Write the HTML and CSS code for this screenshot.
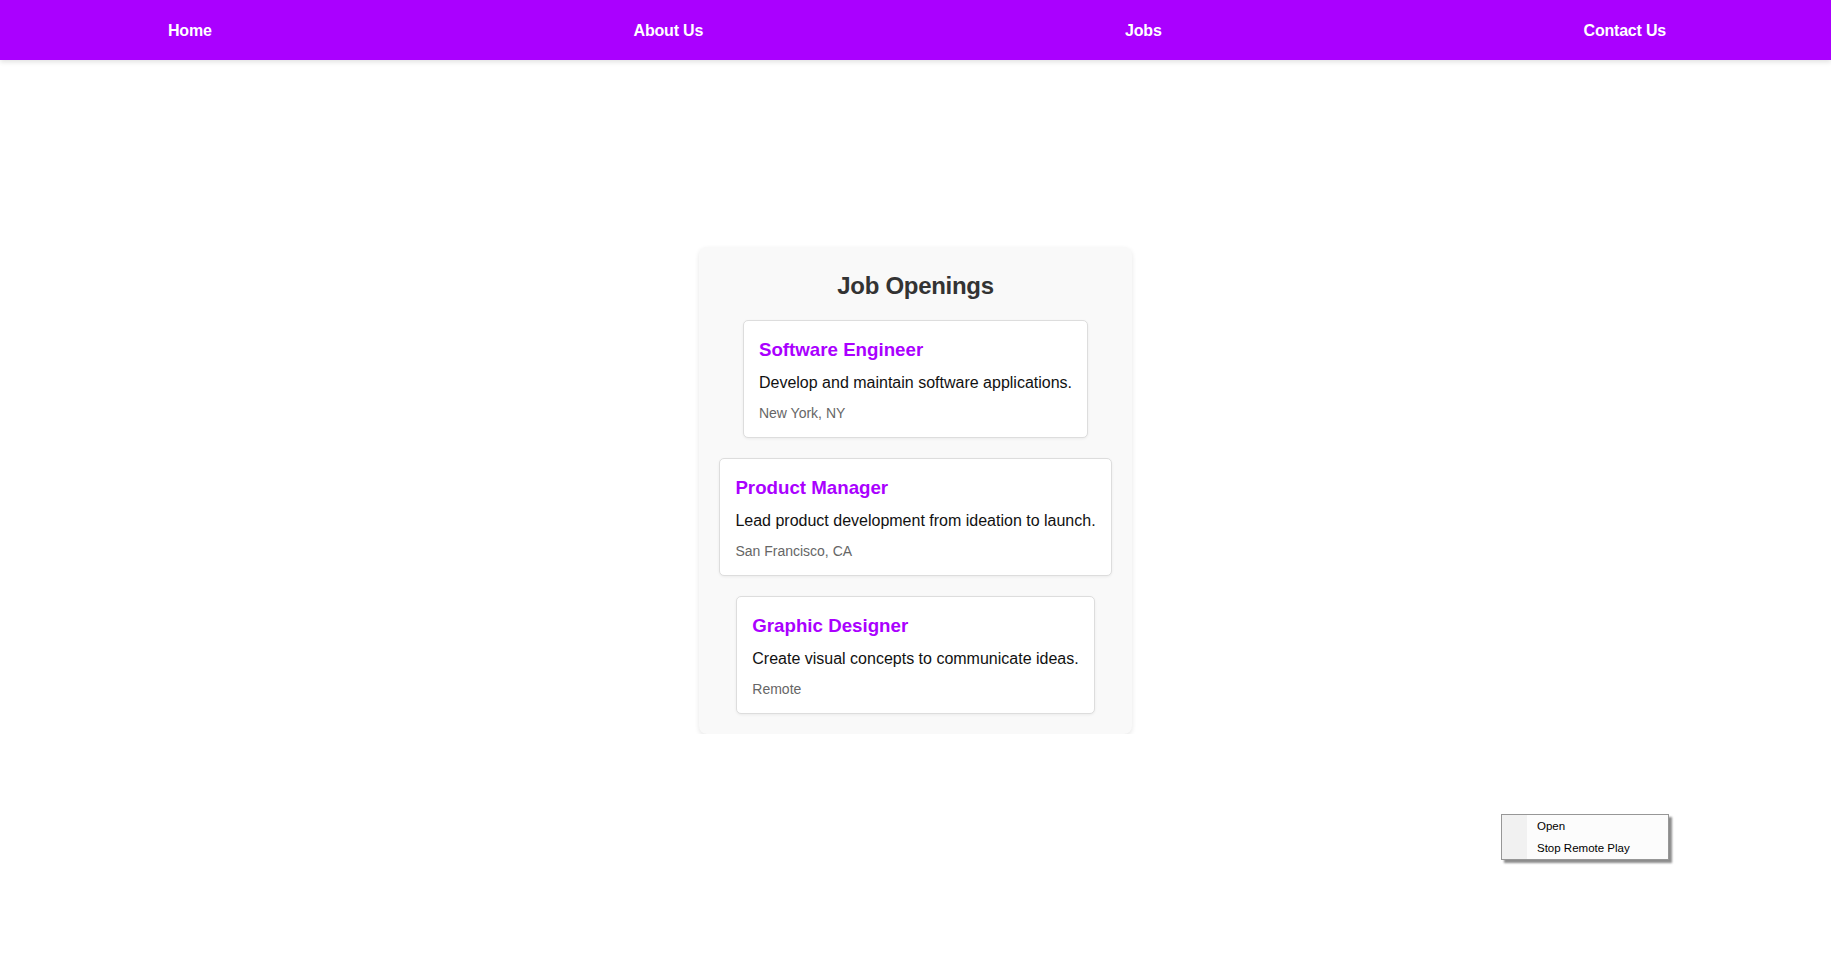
FILE: index.html
```html
<!DOCTYPE html>
<html lang="en">
<head>
<meta charset="utf-8">
<title>Job Openings</title>
<link rel="stylesheet" href="styles.css">
</head>
<body>
<nav class="navbar">
  <ul class="nav-list">
    <li><a href="#">Home</a></li>
    <li><a href="#">About Us</a></li>
    <li><a href="#">Jobs</a></li>
    <li><a href="#">Contact Us</a></li>
  </ul>
</nav>
<main class="main">
  <section class="jobs">
    <h2 class="jobs-title">Job Openings</h2>
    <div class="job-card">
      <h3 class="job-name">Software Engineer</h3>
      <p class="job-desc">Develop and maintain software applications.</p>
      <p class="job-loc">New York, NY</p>
    </div>
    <div class="job-card">
      <h3 class="job-name">Product Manager</h3>
      <p class="job-desc">Lead product development from ideation to launch.</p>
      <p class="job-loc">San Francisco, CA</p>
    </div>
    <div class="job-card">
      <h3 class="job-name">Graphic Designer</h3>
      <p class="job-desc">Create visual concepts to communicate ideas.</p>
      <p class="job-loc">Remote</p>
    </div>
  </section>
</main>
<div class="context-menu">
  <div class="menu-item">Open</div>
  <div class="menu-item">Stop Remote Play</div>
</div>
</body>
</html>
```
FILE: styles.css
```css
html, body {
  margin: 0;
  padding: 0;
  background: #ffffff;
  font-family: "Liberation Sans", Arial, sans-serif;
}

.navbar {
  height: 60px;
  background: #aa00ff;
  box-shadow: 0 2px 5px rgba(0, 0, 0, 0.12);
  position: relative;
}

.nav-list {
  list-style: none;
  margin: 0;
  height: 100%;
  padding: 0 165px 0 168px;
  display: flex;
  justify-content: space-between;
  align-items: center;
}

.nav-list a {
  color: #ffffff;
  text-decoration: none;
  font-weight: bold;
  font-size: 16px;
  line-height: 20px;
  letter-spacing: -0.2px;
  display: block;
  padding-top: 1px;
}

.main {
  display: flex;
  justify-content: center;
  padding-top: 187px;
}

.jobs {
  background: #f9f9f9;
  border-radius: 8px;
  box-shadow: 0 2px 5px rgba(0, 0, 0, 0.1);
  padding: 20px;
  display: flex;
  flex-direction: column;
  align-items: center;
}

.jobs-title {
  margin: 0 0 16px;
  font-size: 24px;
  line-height: 37px;
  font-weight: bold;
  letter-spacing: -0.3px;
  color: #333333;
  text-align: center;
}

.job-card {
  background: #ffffff;
  border: 1px solid #dddddd;
  border-radius: 5px;
  box-shadow: 0 1px 3px rgba(0, 0, 0, 0.06);
  padding: 15px;
  margin-bottom: 20px;
}

.job-card:last-child {
  margin-bottom: 0;
}

.job-name {
  margin: 0 0 9px;
  font-size: 18.72px;
  line-height: 27px;
  font-weight: bold;
  color: #aa00ff;
}

.job-desc {
  margin: 0 0 11px;
  font-size: 16px;
  line-height: 21px;
  color: #111111;
}

.job-loc {
  margin: 0;
  font-size: 14px;
  line-height: 18px;
  color: #666666;
}

.context-menu {
  position: absolute;
  left: 1501px;
  top: 814px;
  width: 166px;
  padding: 0;
  border: 1px solid #979797;
  background: linear-gradient(to right, #f1f1f1 0, #f1f1f1 25px, #fcfcfc 25px);
  box-shadow: 3px 3px 2px rgba(0, 0, 0, 0.45);
}

.menu-item {
  height: 22px;
  line-height: 22px;
  padding-left: 35px;
  font-size: 11.5px;
  color: #000000;
}
```
